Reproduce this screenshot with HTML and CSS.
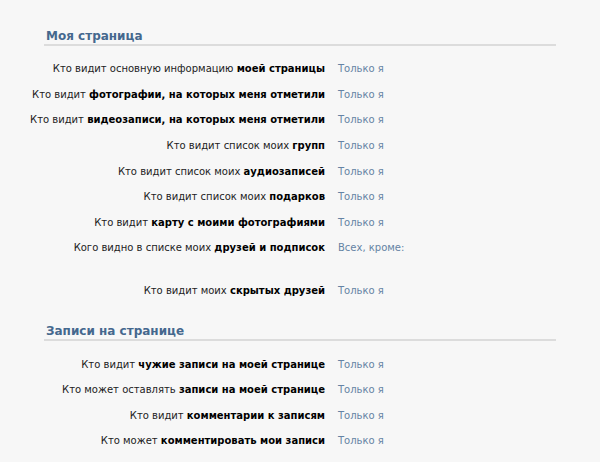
FILE: index.html
```html
<!DOCTYPE html>
<html lang="ru">
<head>
    <meta charset="UTF-8">
    <title>Настройки приватности</title>
    <link rel="stylesheet" href="styles.css">
</head>
<body>
<div class="settings">
    <div class="section">
        <div class="section-title">Моя страница</div>
        <div class="rows">
            <div class="row">
                <div class="label">Кто видит основную информацию <b>моей страницы</b></div>
                <div class="value">Только я</div>
            </div>
            <div class="row">
                <div class="label">Кто видит <b>фотографии, на которых меня отметили</b></div>
                <div class="value">Только я</div>
            </div>
            <div class="row">
                <div class="label">Кто видит <b>видеозаписи, на которых меня отметили</b></div>
                <div class="value">Только я</div>
            </div>
            <div class="row">
                <div class="label">Кто видит список моих <b>групп</b></div>
                <div class="value">Только я</div>
            </div>
            <div class="row">
                <div class="label">Кто видит список моих <b>аудиозаписей</b></div>
                <div class="value">Только я</div>
            </div>
            <div class="row">
                <div class="label">Кто видит список моих <b>подарков</b></div>
                <div class="value">Только я</div>
            </div>
            <div class="row">
                <div class="label">Кто видит <b>карту с моими фотографиями</b></div>
                <div class="value">Только я</div>
            </div>
            <div class="row">
                <div class="label">Кого видно в списке моих <b>друзей и подписок</b></div>
                <div class="value">Всех, кроме:</div>
            </div>
            <div class="row spaced">
                <div class="label">Кто видит моих <b>скрытых друзей</b></div>
                <div class="value">Только я</div>
            </div>
        </div>
    </div>
    <div class="section">
        <div class="section-title">Записи на странице</div>
        <div class="rows">
            <div class="row">
                <div class="label">Кто видит <b>чужие записи на моей странице</b></div>
                <div class="value">Только я</div>
            </div>
            <div class="row">
                <div class="label">Кто может оставлять <b>записи на моей странице</b></div>
                <div class="value">Только я</div>
            </div>
            <div class="row">
                <div class="label">Кто видит <b>комментарии к записям</b></div>
                <div class="value">Только я</div>
            </div>
            <div class="row">
                <div class="label">Кто может <b>комментировать мои записи</b></div>
                <div class="value">Только я</div>
            </div>
        </div>
    </div>
</div>
</body>
</html>
```

FILE: styles.css
```css
body{
    margin: 0;
    background: #f7f7f7;
    font-family: "DejaVu Sans", Tahoma, sans-serif;
    font-size: 10px;
    color: #000;
}
.settings{
    padding: 29px 0 0 0;
}
.section{
    margin-bottom: 21px;
}
.section-title{
    margin-left: 44px;
    width: 510px;
    padding: 0 0 1px 2px;
    border-bottom: 2px solid #dcdcdc;
    color: #45688e;
    font-weight: bold;
    font-size: 12px;
    line-height: 14px;
}
.rows{
    padding-top: 10px;
}
.row{
    display: flex;
    align-items: center;
    gap: 13px;
    height: 25.6px;
}
.label{
    width: 325px;
    flex-shrink: 0;
    text-align: right;
    white-space: nowrap;
    color: #222;
}
.label b{
    color: #000;
}
.value{
    color: #6583a4;
}
.spaced{
    margin-top: 17px;
}
```
